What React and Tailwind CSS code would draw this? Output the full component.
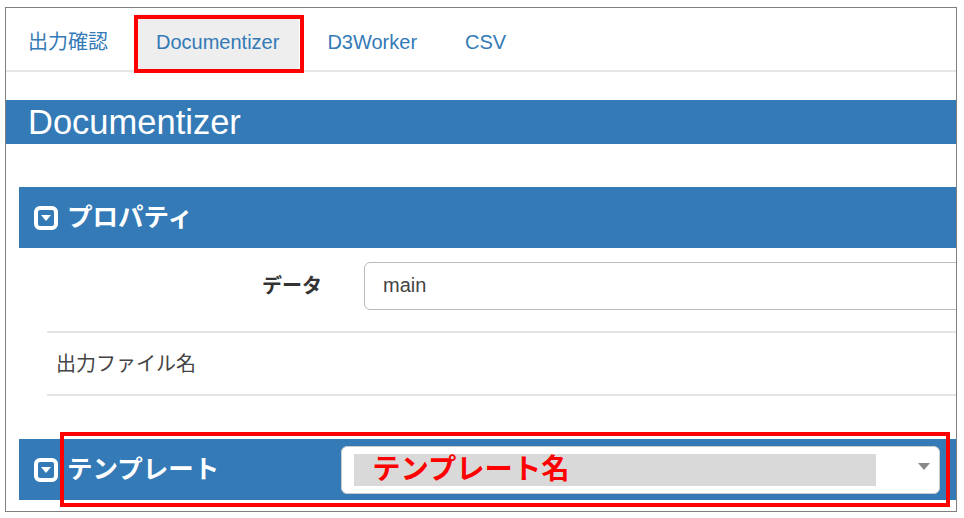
const tabs = ['出力確認', 'Documentizer', 'D3Worker', 'CSV']

const CaretIcon = () => (
  <svg width="24" height="24" viewBox="0 0 24 24" className="shrink-0">
    <rect x="2" y="2" width="20" height="20" rx="4" fill="none" stroke="#fff" strokeWidth="4" />
    <path d="M7 9h10l-5 6z" fill="#fff" />
  </svg>
)

const Nav = () => (
  <nav className="h-[64px] flex gap-[8px] border-b-2 border-[#e7e7e7] pl-[2px] pt-[6px] text-[20px] text-[#337ab7]">
    {tabs.map((t) => (
      <a
        key={t}
        className={
          t === 'Documentizer'
            ? 'h-[56px] px-[20px] flex items-center bg-[#eeeeee]'
            : 'h-[56px] px-[20px] flex items-center'
        }
      >
        {t}
      </a>
    ))}
  </nav>
)

const SectionBar = ({ title, children }) => (
  <div className="h-[61px] ml-[13px] bg-[#337ab7] flex items-center pl-[15px] text-white">
    <CaretIcon />
    <span className="ml-[9px] text-[25.5px] font-bold">{title}</span>
    {children}
  </div>
)

export default function App() {
  return (
    <div className="w-[964px] h-[518px] bg-white pl-[5px] pt-[7px] font-['Liberation_Sans','Noto_Sans_CJK_JP',sans-serif]">
      <div className="relative w-[952px] h-[505px] border border-[#7f7f7f]">
        <div className="h-full overflow-hidden">
          <Nav />
          <h1 className="mt-[28px] h-[44px] bg-[#337ab7] pl-[22px] text-[34.5px] leading-[44px] text-white">
            Documentizer
          </h1>

          <div className="mt-[43px]">
            <SectionBar title="プロパティ" />
            <div className="ml-[41px] h-[85px] border-b-2 border-[#e5e5e5] pt-[14px] flex">
              <label className="w-[233px] pt-[9px] pl-[215px] whitespace-nowrap text-[20px] font-bold text-[#333333]">
                データ
              </label>
              <div className="ml-[84px] w-[700px] h-[48px] shrink-0 rounded-[6px] border border-[#bbbbbb] pl-[18px] pb-[2px] flex items-center text-[20px] text-[#444444]">
                main
              </div>
            </div>
            <div className="ml-[41px] h-[63px] border-b-2 border-[#e5e5e5] pl-[9px] flex items-center text-[20px] text-[#444444]">
              出力ファイル名
            </div>
          </div>

          <div className="mt-[43px]">
            <SectionBar title="テンプレート">
              <div className="ml-[122px] w-[599px] h-[48px] rounded-[6px] bg-white border border-[#cccccc] flex items-center pl-[12px]">
                <div className="w-[522px] h-[32px] bg-[#d9d9d9] pl-[18px] flex items-center text-[28.3px] font-bold text-[#ff0000] whitespace-nowrap">
                  テンプレート名
                </div>
                <div className="ml-[42px] mb-[6px] w-0 h-0 border-x-[6px] border-x-transparent border-t-[7px] border-t-[#888888]" />
              </div>
            </SectionBar>
          </div>
        </div>

        {/* red annotation boxes */}
        <div className="absolute left-[128px] top-[7px] w-[170px] h-[58px] border-4 border-[#ff0000]" />
        <div className="absolute left-[54px] top-[424px] w-[890px] h-[75px] border-4 border-[#ff0000]" />
      </div>
    </div>
  )
}
